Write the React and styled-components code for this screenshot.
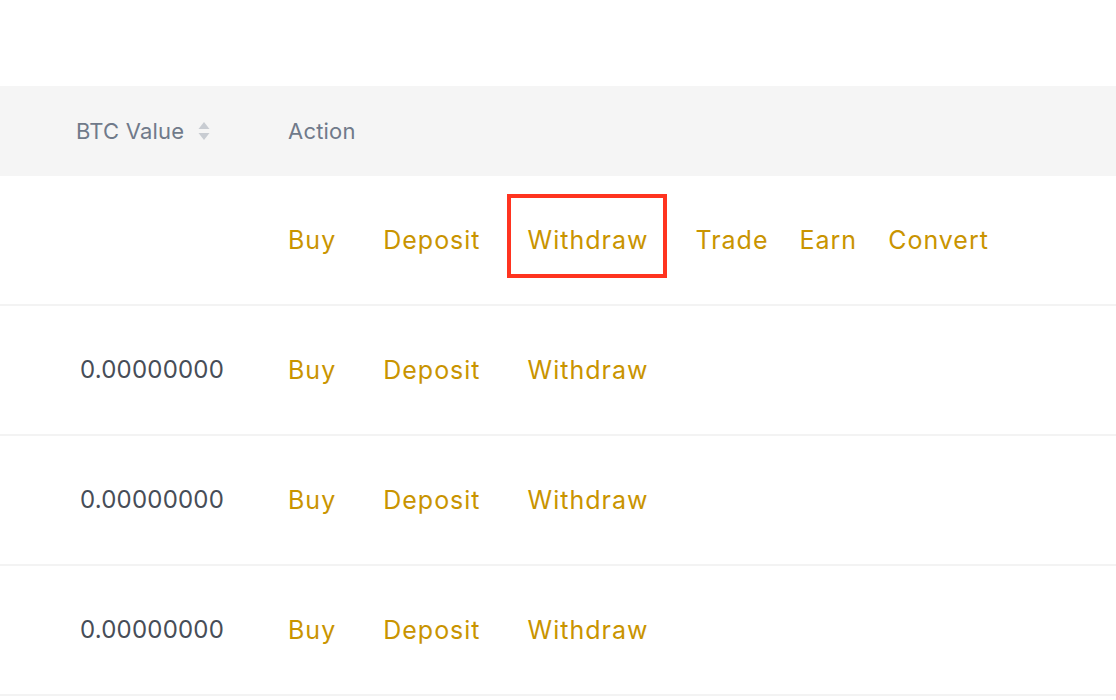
import styled, { createGlobalStyle } from "styled-components";

const GlobalStyle = createGlobalStyle`
    body {
        margin: 0;
        background: #ffffff;
        font-family: Inter, "Noto Sans", "Liberation Sans", sans-serif;
    }
`

const rows = [
    { value: "", actions: ["Buy", "Deposit", "Withdraw", "Trade", "Earn", "Convert"], marked: "Withdraw" },
    { value: "0.00000000", actions: ["Buy", "Deposit", "Withdraw"] },
    { value: "0.00000000", actions: ["Buy", "Deposit", "Withdraw"] },
    { value: "0.00000000", actions: ["Buy", "Deposit", "Withdraw"] },
]

const SortIcon = () => (
    <svg width="12" height="20" viewBox="0 0 12 20">
        <path d="M6 1 L11.5 8 L0.5 8 Z" fill="#c8ccd2" />
        <path d="M6 19 L11.5 12 L0.5 12 Z" fill="#c8ccd2" />
    </svg>
)

const App = () => {
    return (
        <>
            <GlobalStyle />
            <Page>
                <Table>
                    <HeadRow>
                        <HeadCell>
                            BTC Value
                            <SortWrap><SortIcon /></SortWrap>
                        </HeadCell>
                        <HeadCell>Action</HeadCell>
                    </HeadRow>
                    {rows.map((row, i) => (
                        <Row key={i}>
                            <Value>{row.value}</Value>
                            <Actions>
                                {row.actions.map((a, j) => (
                                    <ActionLink key={a} $wide={j < 3} $marked={a === row.marked}>{a}</ActionLink>
                                ))}
                            </Actions>
                        </Row>
                    ))}
                </Table>
            </Page>
        </>
    )
}

export default App

const Page = styled.div`
    width: 1116px;
    height: 700px;
    padding-top: 86px;
    box-sizing: border-box;
    overflow: hidden;
    background: #ffffff;
`
const Table = styled.div`
    display: flex;
    flex-direction: column;
`
const HeadRow = styled.div`
    display: grid;
    grid-template-columns: 148px 1fr;
    column-gap: 64px;
    align-items: center;
    height: 90px;
    padding-left: 76px;
    background: #f5f5f5;
`
const HeadCell = styled.div`
    display: flex;
    align-items: center;
    font-size: 22px;
    line-height: 26px;
    letter-spacing: 0.2px;
    color: #707a8a;
`
const SortWrap = styled.span`
    display: flex;
    margin-left: 14px;
`
const Row = styled.div`
    display: grid;
    grid-template-columns: 148px 1fr;
    column-gap: 64px;
    align-items: center;
    height: 128px;
    padding-left: 76px;
    border-bottom: 2px solid #f3f3f3;
`
const Value = styled.div`
    text-align: right;
    font-size: 24px;
    line-height: 30px;
    letter-spacing: 0.2px;
    color: #474d57;
`
const Actions = styled.div`
    display: flex;
    align-items: center;
`
const ActionLink = styled.span`
    position: relative;
    font-size: 25px;
    line-height: 30px;
    letter-spacing: 1px;
    color: #c99400;
    margin-right: ${p => (p.$wide ? "47px" : "31px")};
    &::after {
        content: "";
        display: ${p => (p.$marked ? "block" : "none")};
        position: absolute;
        left: -21px;
        right: -19px;
        top: -31px;
        bottom: -23px;
        border: 4px solid #ff3420;
    }
`
